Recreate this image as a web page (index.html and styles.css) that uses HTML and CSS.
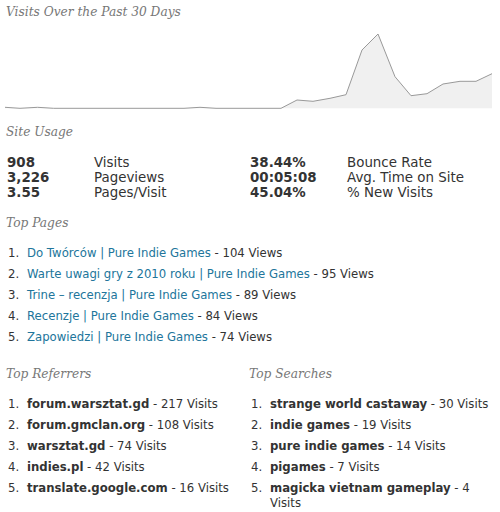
FILE: index.html
```html
<!DOCTYPE html>
<html lang="en">
<head>
    <meta charset="utf-8">
    <title>Stats</title>
    <link rel="stylesheet" href="styles.css">
</head>
<body>
<div class="container">
    <h3 class="heading">Visits Over the Past 30 Days</h3>
    <svg class="chart" width="500" height="92" viewBox="0 0 500 92">
        <polygon class="area" points="5,87.3 20,88.3 37.5,87.3 53.7,88.3 70,88.3 86,88.3 102,88.3 119,88.3 135,88.3 151,88.3 167,88.3 184,88.3 200,87.3 216,88.3 232,88.3 248,88.3 265,88.3 281,88.3 297,80 313,81.3 330,78.3 346,74.7 362,30 378,14 395,56.7 411,75.7 427,73.7 443,64 460,61.3 476,61.3 492,53.7 492,88.3 5,88.3"/>
        <polyline class="line" points="5,87.3 20,88.3 37.5,87.3 53.7,88.3 70,88.3 86,88.3 102,88.3 119,88.3 135,88.3 151,88.3 167,88.3 184,88.3 200,87.3 216,88.3 232,88.3 248,88.3 265,88.3 281,88.3 297,80 313,81.3 330,78.3 346,74.7 362,30 378,14 395,56.7 411,75.7 427,73.7 443,64 460,61.3 476,61.3 492,53.7"/>
    </svg>

    <h3 class="heading">Site Usage</h3>
    <table class="stats">
        <tr>
            <td class="num">908</td><td class="label">Visits</td>
            <td class="num wide">38.44%</td><td>Bounce Rate</td>
        </tr>
        <tr>
            <td class="num">3,226</td><td class="label">Pageviews</td>
            <td class="num wide">00:05:08</td><td>Avg. Time on Site</td>
        </tr>
        <tr>
            <td class="num">3.55</td><td class="label">Pages/Visit</td>
            <td class="num wide">45.04%</td><td>% New Visits</td>
        </tr>
    </table>

    <h3 class="heading">Top Pages</h3>
    <ol class="list">
        <li><a href="#">Do Twórców | Pure Indie Games</a> - 104 Views</li>
        <li><a href="#">Warte uwagi gry z 2010 roku | Pure Indie Games</a> - 95 Views</li>
        <li><a href="#">Trine – recenzja | Pure Indie Games</a> - 89 Views</li>
        <li><a href="#">Recenzje | Pure Indie Games</a> - 84 Views</li>
        <li><a href="#">Zapowiedzi | Pure Indie Games</a> - 74 Views</li>
    </ol>

    <div class="cols">
        <div class="col">
            <h3 class="heading">Top Referrers</h3>
            <ol class="list">
                <li><strong>forum.warsztat.gd</strong> - 217 Visits</li>
                <li><strong>forum.gmclan.org</strong> - 108 Visits</li>
                <li><strong>warsztat.gd</strong> - 74 Visits</li>
                <li><strong>indies.pl</strong> - 42 Visits</li>
                <li><strong>translate.google.com</strong> - 16 Visits</li>
            </ol>
        </div>
        <div class="col">
            <h3 class="heading">Top Searches</h3>
            <ol class="list">
                <li><strong>strange world castaway</strong> - 30 Visits</li>
                <li><strong>indie games</strong> - 19 Visits</li>
                <li><strong>pure indie games</strong> - 14 Visits</li>
                <li><strong>pigames</strong> - 7 Visits</li>
                <li><strong>magicka vietnam gameplay</strong> - 4 Visits</li>
            </ol>
        </div>
    </div>
</div>
</body>
</html>
```

FILE: styles.css
```css
body {
    margin: 0;
    background: #fff;
}
.container {
    padding: 4px 6px 0 6px;
    font-family: 'DejaVu Sans', Verdana, sans-serif;
    font-size: 11.7px;
    line-height: 15px;
    color: #333;
}
.heading {
    margin: 0;
    font-family: 'DejaVu Serif', Georgia, serif;
    font-style: italic;
    font-weight: normal;
    font-size: 12.2px;
    line-height: 16px;
    color: #777;
}
.chart {
    display: block;
    margin-left: -6px;
    margin-bottom: 12px;
}
.chart .area {
    fill: #f0f0f0;
}
.chart .line {
    fill: none;
    stroke: #999;
    stroke-width: 1;
}
.stats {
    margin: 15px 0 15px 1px;
    border-collapse: collapse;
    font-size: 13.4px;
}
.stats td {
    padding: 0;
    line-height: 15px;
}
.stats .num {
    font-weight: bold;
    width: 87px;
}
.stats .num.wide {
    width: 97px;
}
.stats .label {
    width: 156px;
}
.list {
    margin: 15px 0 0 0;
    padding-left: 21px;
    list-style: none;
    counter-reset: item;
}
.list li {
    margin-bottom: 6px;
    counter-increment: item;
}
.list li::before {
    content: counter(item) ".";
    float: left;
    width: 19px;
    margin-left: -19px;
}
.list a {
    color: #21759b;
    text-decoration: none;
}
.cols {
    display: grid;
    grid-template-columns: 243px 1fr;
    margin-top: 21px;
}
.col .list strong {
    color: #333;
}
```
